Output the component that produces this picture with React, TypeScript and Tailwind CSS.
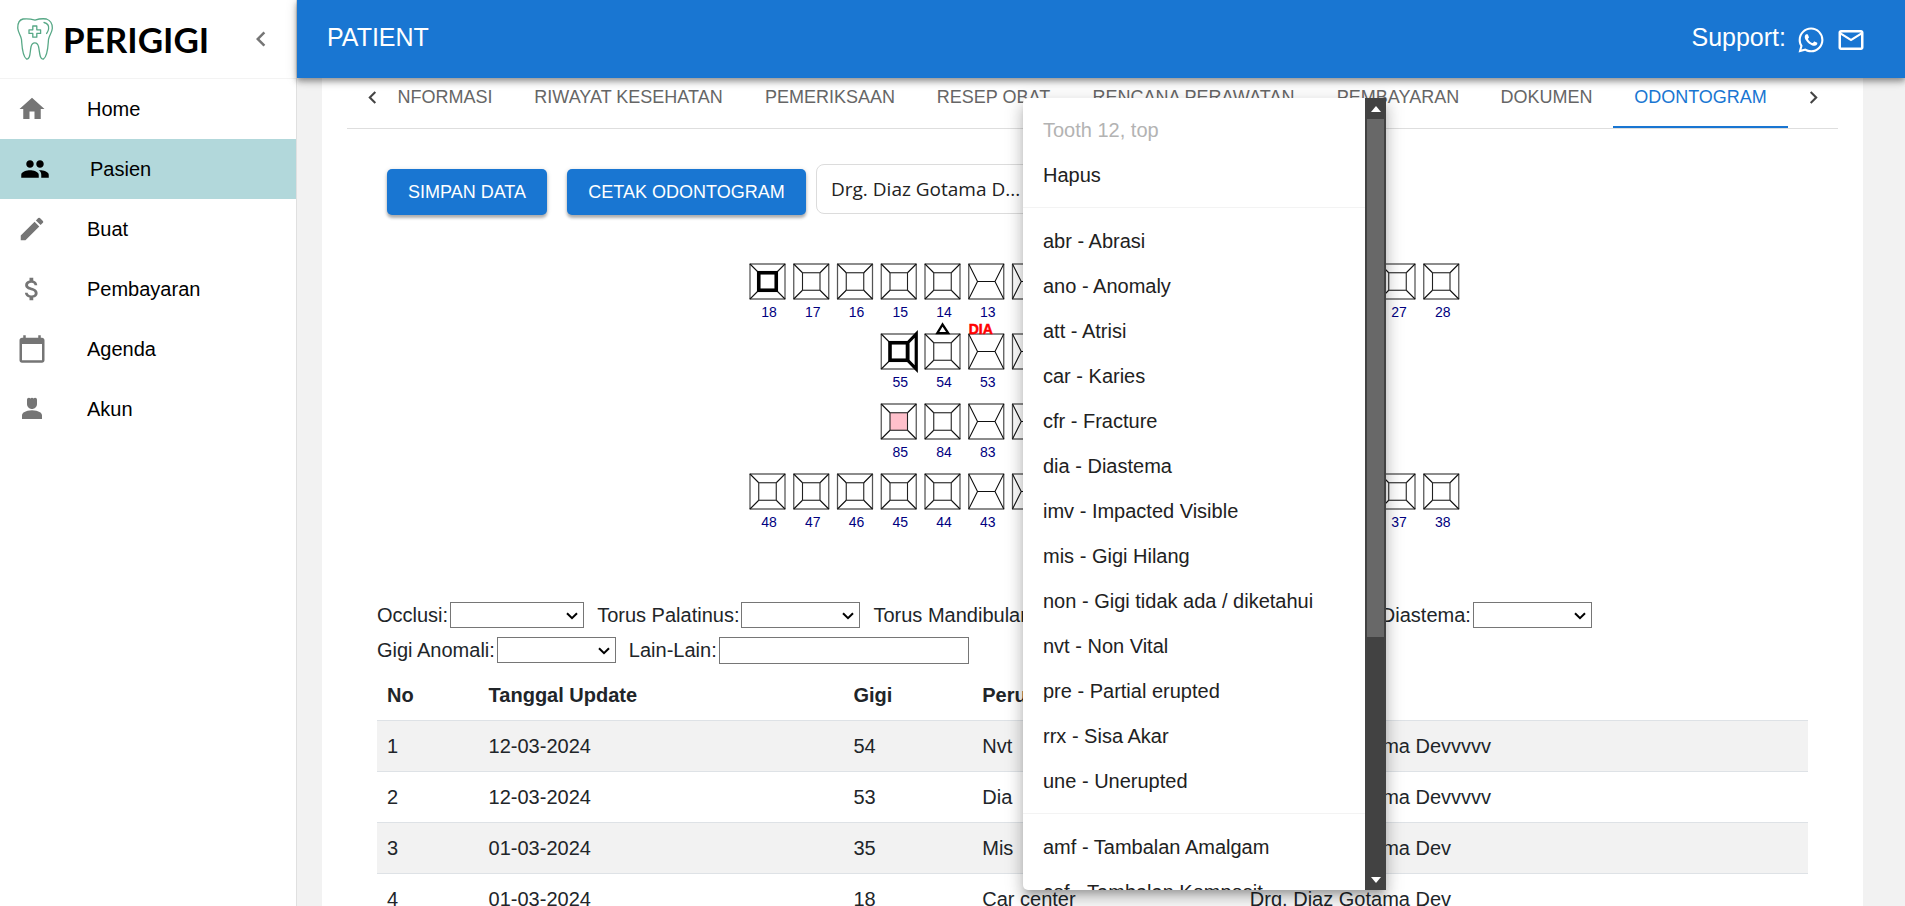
import React from "react";
import {
  MdAttachMoney,
  MdCalendarToday,
  MdChevronLeft,
  MdChevronRight,
  MdEdit,
  MdHome,
  MdMailOutline,
  MdPeople,
  MdOutlineWhatsapp,
} from "react-icons/md";

function PersonIcon({ className }: { className?: string }) {
  return (
    <svg viewBox="0 0 24 24" fill="currentColor" className={className} aria-hidden="true">
      <path d="M18.39 14.56C16.71 13.7 14.53 13 12 13s-4.71.7-6.39 1.56C4.61 15.07 4 16.1 4 17.22V20h16v-2.78c0-1.12-.61-2.15-1.61-2.66zM12 12c2.21 0 4-1.79 4-4V4.5c0-.83-.67-1.5-1.5-1.5-.52 0-.98.27-1.25.67-.27-.4-.73-.67-1.25-.67s-.98.27-1.25.67C10.48 3.27 10.02 3 9.5 3 8.67 3 8 3.67 8 4.5V8c0 2.21 1.79 4 4 4z" />
    </svg>
  );
}

function ToothLogo() {
  return (
    <svg viewBox="0 0 36 42" className="h-[42px] w-9 shrink-0" fill="none" stroke="#57a886" strokeWidth="1.3" strokeLinecap="round" strokeLinejoin="round" aria-hidden="true">
      <path d="M18 2.200C13 .6 9 .6 6 1C2 2 .6 6 .8 10.500C1.200 15 4 17.500 4.500 21.500C5 27 5 38 9.500 41C13.500 42 13 33 14 29C14.600 25.500 16 24.800 17.800 24.800C19.800 24.800 21 25.500 21.600 29C22.600 33 22.500 42 26.500 41C31 38 31 27 31.500 21.500C32 17.500 35 15 35.300 10.500C35.500 6 33.500 2.500 29.500 1C26 .5 22 .8 18 2.200Z" />
      <path d="M15.800 8h4v3.800h3.800v3.600h-3.800v3.800h-4v-3.800H12v-3.600h3.800z" />
      <path d="M27 4.500C30.500 5.200 32 8 31.600 11C31.300 13 30.400 14.300 29.600 15.500" />
    </svg>
  );
}

const navItems = [
  { label: "Home", Icon: MdHome },
  { label: "Pasien", Icon: MdPeople },
  { label: "Buat", Icon: MdEdit },
  { label: "Pembayaran", Icon: MdAttachMoney },
  { label: "Agenda", Icon: MdCalendarToday },
  { label: "Akun", Icon: PersonIcon },
];

function Sidebar() {
  return (
    <aside className="flex w-[297px] shrink-0 flex-col border-r border-[#e0e0e0] bg-white">
      <div className="flex h-[79px] items-center justify-between border-b border-[#f3f3f3] pr-5 pl-[17px]">
        <div className="flex items-center gap-[10px]">
          <ToothLogo />
          <span className="font-[Lato] text-[35px] leading-none font-bold text-black">PERIGIGI</span>
        </div>
        <button type="button" aria-label="Collapse menu" className="text-[#757575]">
          <MdChevronLeft className="size-[30px]" />
        </button>
      </div>
      <nav className="flex flex-col">
        {navItems.map(({ label, Icon }) => {
          const active = label === "Pasien";
          return (
            <a
              key={label}
              href="#"
              className={
                active
                  ? "flex h-[60px] items-center gap-[40px] bg-[#b2d8db] px-5 text-[20px] text-black"
                  : "flex h-[60px] items-center gap-[40px] px-[17px] text-[20px] text-black"
              }
            >
              <Icon className={active ? "size-[30px]" : "size-[30px] text-[#757575]"} />
              {label}
            </a>
          );
        })}
      </nav>
    </aside>
  );
}

function TopBar() {
  return (
    <header className="relative z-10 flex h-[78px] shrink-0 items-center justify-between bg-[#1976d2] pt-0.5 pr-[39px] pl-[30px] text-[25px] text-white shadow-[0_2px_5px_rgba(0,0,0,0.25),0_5px_6px_rgba(0,0,0,0.16),0_1px_12px_rgba(0,0,0,0.14)]">
      <h1 className="pb-1">PATIENT</h1>
      <div className="flex items-center gap-[10px]">
        <span className="pb-1">Support:</span>
        <a href="#" aria-label="WhatsApp">
          <MdOutlineWhatsapp className="size-[30px]" />
        </a>
        <a href="#" aria-label="Email">
          <MdMailOutline className="size-[30px]" />
        </a>
      </div>
    </header>
  );
}

const tabs = [
  { label: "INFORMASI", width: "w-[141px]" },
  { label: "RIWAYAT KESEHATAN", width: "w-[231px]" },
  { label: "PEMERIKSAAN", width: "w-[172px]" },
  { label: "RESEP OBAT", width: "w-[155px]" },
  { label: "RENCANA PERAWATAN", width: "w-[245px]" },
  { label: "PEMBAYARAN", width: "w-[164px]" },
  { label: "DOKUMEN", width: "w-[133px]" },
  { label: "ODONTOGRAM", width: "w-[175px]" },
];

function TabBar() {
  return (
    <div className="flex h-[51px] border-b border-[#dedede] text-[18px]">
      <button type="button" aria-label="Previous tabs" className="flex w-[50px] shrink-0 items-start justify-center pt-[7px] text-[#444]">
        <MdChevronLeft className="size-[25px]" />
      </button>
      <div role="tablist" className="flex min-w-0 flex-1 justify-end overflow-hidden">
        {tabs.map(({ label, width }) => (
          <button
            key={label}
            type="button"
            role="tab"
            aria-selected={label === "ODONTOGRAM"}
            className={
              label === "ODONTOGRAM"
                ? `shrink-0 border-b-2 border-[#1976d2] pb-[10px] whitespace-nowrap text-[#1976d2] ${width}`
                : `shrink-0 pb-[12px] whitespace-nowrap text-[#666] ${width}`
            }
          >
            {label}
          </button>
        ))}
      </div>
      <button type="button" aria-label="Next tabs" className="flex w-[50px] shrink-0 items-start justify-center pt-[7px] text-[#444]">
        <MdChevronRight className="size-[25px]" />
      </button>
    </div>
  );
}

type ToothRow = { y: number; left: number[]; right: number[] };

const toothRows: ToothRow[] = [
  { y: 0, left: [18, 17, 16, 15, 14, 13, 12, 11], right: [21, 22, 23, 24, 25, 26, 27, 28] },
  { y: 70, left: [55, 54, 53, 52, 51], right: [61, 62, 63, 64, 65] },
  { y: 140, left: [85, 84, 83, 82, 81], right: [71, 72, 73, 74, 75] },
  { y: 210, left: [48, 47, 46, 45, 44, 43, 42, 41], right: [31, 32, 33, 34, 35, 36, 37, 38] },
];

const PITCH = 43.75;

function Tooth({ x, y, id }: { x: number; y: number; id: number }) {
  const anterior = id % 10 <= 3;
  return (
    <g transform={`translate(${x} ${y})`}>
      <g fill="none" stroke="#111" strokeWidth="1.1">
        <path d="M-.5 0H35.500M-.5 35H35.500" stroke="#8c8c8c" strokeWidth="2" />
        <path d="M0 0V35M35 0V35" stroke="#555" strokeWidth="1.250" />
        {anterior ? (
          <path d="M0 0L8.750 17.500L0 35M35 0L26.250 17.500L35 35M8.750 17.500H26.250" />
        ) : (
          <>
            <path d="M0 0L8.750 8.750M35 0L26.250 8.750M0 35L8.750 26.250M35 35L26.250 26.250" />
            <rect x="8.750" y="8.750" width="17.500" height="17.500" fill={id === 85 ? "#ffc0cb" : "none"} stroke="#222" />
          </>
        )}
        {(id === 18 || id === 55) && <rect x="8.750" y="8.750" width="17.500" height="17.500" stroke="#000" strokeWidth="3.600" />}
        {id === 55 && <path d="M26.500 8.750L35 0V35L26.500 26.250Z" stroke="#000" strokeWidth="3.200" />}
        {id === 54 && <path d="M17.500 -9.500L12.300 -.8H23.200Z" stroke="#000" strokeWidth="2.300" />}
      </g>
      {id === 53 && (
        <text x="0" y="0" fill="#ff0000" stroke="#ff0000" strokeWidth=".5" fontSize="14" fontWeight="700">
          DIA
        </text>
      )}
      <text x="19" y="53" textAnchor="middle" fill="#000080" fontSize="14">
        {id}
      </text>
    </g>
  );
}

function Odontogram() {
  return (
    <svg viewBox="0 0 735 285" className="h-[285px] w-[735px]" fontFamily="Liberation Sans, Arial, sans-serif" role="img" aria-label="Odontogram">
      {toothRows.map((row) => (
        <g key={row.y}>
          {row.left.map((id, i) => (
            <Tooth key={id} id={id} x={25 + (8 - row.left.length + i) * PITCH} y={14 + row.y} />
          ))}
          {row.right.map((id, i) => (
            <Tooth key={id} id={id} x={392.5 + i * PITCH} y={14 + row.y} />
          ))}
        </g>
      ))}
    </svg>
  );
}

function SelectField({ label, id, className }: { label: string; id: string; className: string }) {
  return (
    <div className="flex items-center">
      <label htmlFor={id} className="pr-0.5">
        {label}:
      </label>
      <div className="relative flex">
        <select id={id} defaultValue="" className={`h-[26px] appearance-none border border-[#767676] bg-white ${className}`}>
          <option value=""></option>
        </select>
        <svg viewBox="0 0 12 8" className="pointer-events-none absolute top-[10px] right-[6px] h-2 w-3" fill="none" stroke="#000" strokeWidth="2" aria-hidden="true">
          <path d="M1 1.200L6 6.200L11 1.200" />
        </svg>
      </div>
    </div>
  );
}

const changes = [
  ["1", "12-03-2024", "54", "Nvt", "Drg. Diaz Gotama Devvvvv"],
  ["2", "12-03-2024", "53", "Dia", "Drg. Diaz Gotama Devvvvv"],
  ["3", "01-03-2024", "35", "Mis", "Drg. Diaz Gotama Dev"],
  ["4", "01-03-2024", "18", "Car center", "Drg. Diaz Gotama Dev"],
];

function ChangesTable() {
  return (
    <table className="w-full table-fixed border-collapse text-left leading-[30px]">
      <colgroup>
        <col className="w-[7.1%]" />
        <col className="w-[25.5%]" />
        <col className="w-[9%]" />
        <col className="w-[18.7%]" />
        <col />
      </colgroup>
      <thead>
        <tr className="border-b border-[#dee2e6]">
          {["No", "Tanggal Update", "Gigi", "Perubahan", "Dokter"].map((h) => (
            <th key={h} className="p-[10px] font-bold">
              {h}
            </th>
          ))}
        </tr>
      </thead>
      <tbody>
        {changes.map((row) => (
          <tr key={row[0]} className="border-b border-[#dee2e6] odd:bg-[#f2f2f2]">
            {row.map((cell, i) => (
              <td key={i} className="p-[10px]">
                {cell}
              </td>
            ))}
          </tr>
        ))}
      </tbody>
    </table>
  );
}

const menuGroups = [
  ["Tooth 12, top", "Hapus"],
  [
    "abr - Abrasi",
    "ano - Anomaly",
    "att - Atrisi",
    "car - Karies",
    "cfr - Fracture",
    "dia - Diastema",
    "imv - Impacted Visible",
    "mis - Gigi Hilang",
    "non - Gigi tidak ada / diketahui",
    "nvt - Non Vital",
    "pre - Partial erupted",
    "rrx - Sisa Akar",
    "une - Unerupted",
  ],
  ["amf - Tambalan Amalgam", "cof - Tambalan Komposit"],
];

function ToothMenu() {
  return (
    <div className="absolute top-[98px] bottom-4 left-[1023px] z-20 flex w-[363px] overflow-hidden rounded-l-[5px] bg-white text-[20px] text-[#212121] shadow-[0_6px_6px_-3px_rgba(0,0,0,0.2),0_10px_14px_1px_rgba(0,0,0,0.14),0_4px_18px_3px_rgba(0,0,0,0.12)]">
      <div role="menu" className="flex-1 overflow-hidden py-[9px]">
        {menuGroups.map((group, g) => (
          <div key={g} className={g > 0 ? "mt-[10px] border-t border-[#f3f3f3] pt-[10px]" : ""}>
            {group.map((item) => (
              <button
                key={item}
                type="button"
                role="menuitem"
                disabled={item === "Tooth 12, top"}
                className="block h-[45px] w-full px-5 text-left disabled:text-[#b3b3b3]"
              >
                {item}
              </button>
            ))}
          </div>
        ))}
      </div>
      <div className="flex w-[21px] flex-col bg-[#424242] px-0.5" aria-hidden="true">
        <div className="flex h-[21px] items-center justify-center">
          <svg viewBox="0 0 10 6" className="h-[6px] w-[10px]" fill="#fff">
            <path d="M5 0L10 6H0z" />
          </svg>
        </div>
        <div className="flex-1">
          <div className="h-[69%] bg-[#686868]" />
        </div>
        <div className="flex h-[21px] items-center justify-center">
          <svg viewBox="0 0 10 6" className="h-[6px] w-[10px]" fill="#fff">
            <path d="M5 6L0 0h10z" />
          </svg>
        </div>
      </div>
    </div>
  );
}

export default function App() {
  return (
    <div className="relative flex h-screen overflow-hidden bg-[#f2f2f2] font-['Liberation_Sans',Arial,sans-serif] text-[20px] text-[#212529]">
      <Sidebar />
      <div className="flex min-w-0 flex-1 flex-col">
        <TopBar />
        <main className="mr-[42px] ml-[25px] flex-1 overflow-hidden bg-white px-[25px]">
          <TabBar />
          <div className="px-[30px]">
            <div className="flex items-start pt-[35px] pl-[10px]">
              <button type="button" className="mt-[5px] mr-5 h-[46px] w-[160px] rounded-[5px] bg-[#1976d2] text-[18px] whitespace-nowrap text-white shadow-[0_3px_3px_rgba(0,0,0,0.25),0_1px_5px_rgba(0,0,0,0.16)]">
                SIMPAN DATA
              </button>
              <button type="button" className="mt-[5px] mr-[10px] h-[46px] w-[239px] rounded-[5px] bg-[#1976d2] text-[18px] whitespace-nowrap text-white shadow-[0_3px_3px_rgba(0,0,0,0.25),0_1px_5px_rgba(0,0,0,0.16)]">
                CETAK ODONTOGRAM
              </button>
              <select aria-label="Dokter" className="h-[50px] w-[250px] appearance-none rounded-[8px] border border-[#dcdcdc] bg-white px-[14px] font-['Open_Sans',sans-serif] text-[19px] text-[#222]">
                <option>Drg. Diaz Gotama D...</option>
              </select>
            </div>
            <div className="flex justify-center pt-[35px]">
              <Odontogram />
            </div>
            <div className="flex flex-col gap-[5px] pt-[65px]">
              <div className="flex gap-[13px]">
                <SelectField label="Occlusi" id="occlusi" className="w-[134px]" />
                <SelectField label="Torus Palatinus" id="torus-palatinus" className="w-[119px]" />
                <SelectField label="Torus Mandibularis" id="torus-mandibularis" className="w-[119px]" />
                <SelectField label="Palatum" id="palatum" className="w-[106px]" />
                <SelectField label="Diastema" id="diastema" className="w-[119px]" />
              </div>
              <div className="flex gap-[13px]">
                <SelectField label="Gigi Anomali" id="gigi-anomali" className="w-[119px]" />
                <div className="flex items-center">
                  <label htmlFor="lain-lain" className="pr-0.5">
                    Lain-Lain:
                  </label>
                  <input id="lain-lain" type="text" className="h-[27px] w-[250px] border border-[#767676] bg-white px-1" />
                </div>
              </div>
            </div>
            <div className="pt-[5px]">
              <ChangesTable />
            </div>
          </div>
        </main>
      </div>
      <ToothMenu />
    </div>
  );
}
